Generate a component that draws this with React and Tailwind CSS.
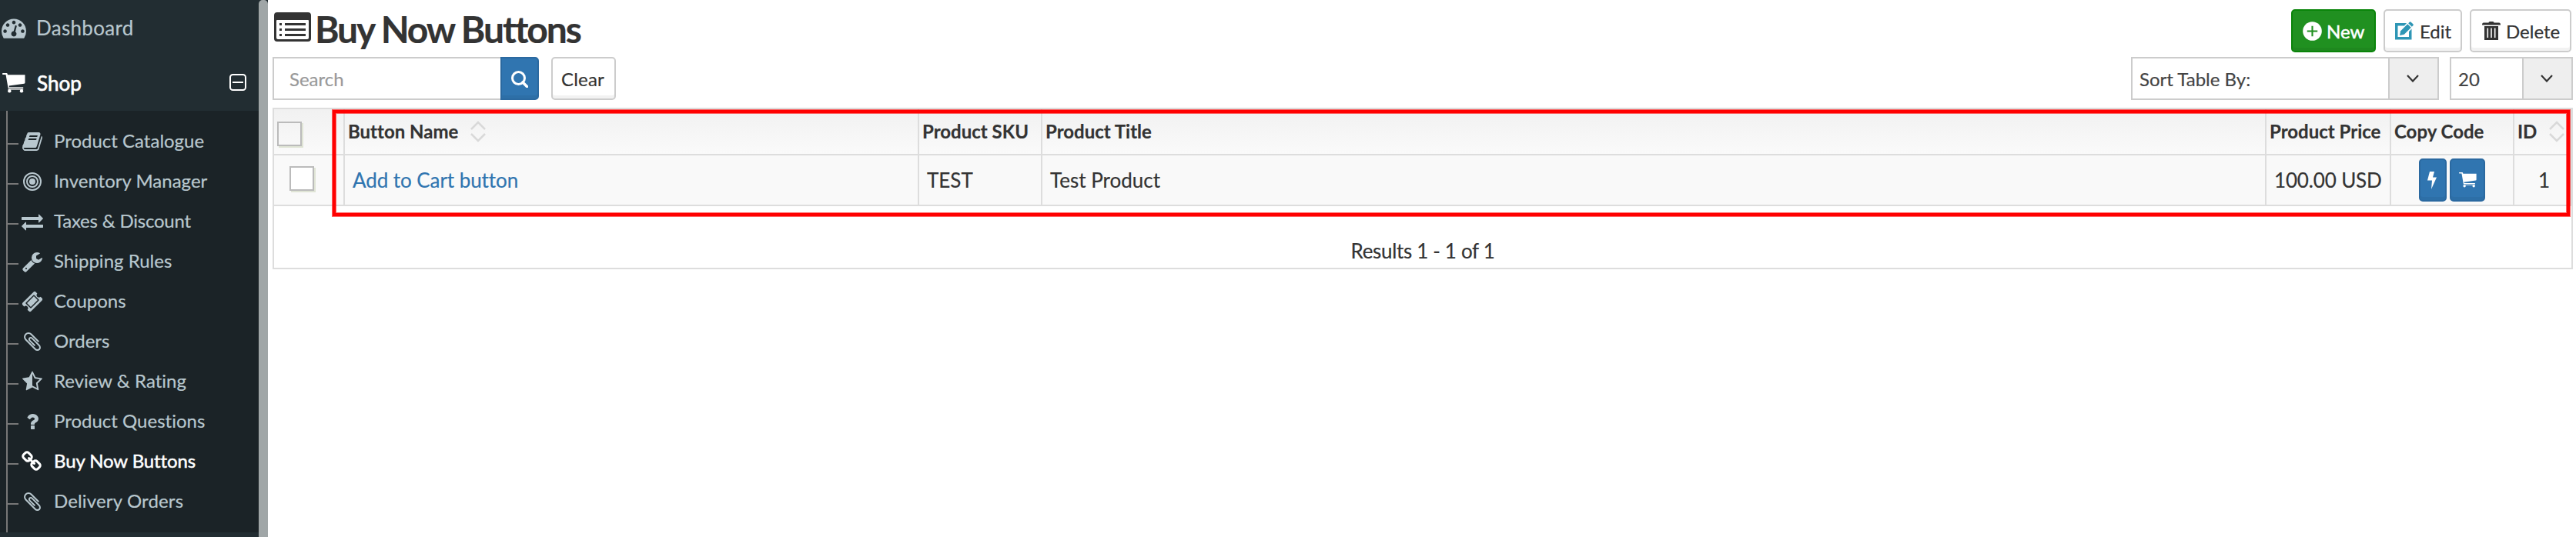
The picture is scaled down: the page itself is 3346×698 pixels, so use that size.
import React from "react";

const P = {
  dash: "M384 1152q0-53-37.5-90.5t-90.5-37.5-90.5 37.5-37.5 90.5 37.5 90.5 90.5 37.5 90.5-37.5 37.5-90.5zm192-448q0-53-37.5-90.5t-90.5-37.5-90.5 37.5-37.5 90.5 37.5 90.5 90.5 37.5 90.5-37.5 37.5-90.5zm428 481l101-382q6-26-7.5-48.5t-38.5-29.5-48 6.5-30 39.5l-101 382q-60 5-107 43.5t-63 98.5q-20 77 20 146t117 89 146-20 89-117q16-60-6-117t-72-91zm660-33q0-53-37.5-90.5t-90.5-37.5-90.5 37.5-37.5 90.5 37.5 90.5 90.5 37.5 90.5-37.5 37.5-90.5zm-640-640q0-53-37.5-90.5t-90.5-37.5-90.5 37.5-37.5 90.5 37.5 90.5 90.5 37.5 90.5-37.5 37.5-90.5zm448 192q0-53-37.5-90.5t-90.5-37.5-90.5 37.5-37.5 90.5 37.5 90.5 90.5 37.5 90.5-37.5 37.5-90.5zm320 448q0 261-141 483-19 29-54 29h-1402q-35 0-54-29-141-221-141-483 0-182 71-348t191-286 286-191 348-71 348 71 286 191 191 286 71 348z",
  link: "M1456 1216q0-40-28-68l-208-208q-28-28-68-28-42 0-72 32 3 3 19 18.5t21.5 21.5 15 19 13 25.5 3.5 27.5q0 40-28 68t-68 28q-15 0-27.5-3.5t-25.5-13-19-15-21.5-21.5-18.5-19q-33 31-33 73 0 40 28 68l206 207q27 27 68 27 40 0 68-26l147-146q28-28 28-67zm-703-705q0-40-28-68l-206-207q-28-28-68-28-39 0-68 27l-147 146q-28 28-28 67 0 40 28 68l208 208q27 27 68 27 42 0 72-31-3-3-19-18.5t-21.5-21.5-15-19-13-25.5-3.5-27.5q0-40 28-68t68-28q15 0 27.5 3.5t25.5 13 19 15 21.5 21.5 18.5 19q33-31 33-73zm895 705q0 120-85 203l-147 146q-83 83-203 83-121 0-204-85l-206-207q-83-83-83-203 0-123 88-209l-88-88q-86 88-208 88-120 0-204-84l-208-208q-84-84-84-204t85-203l147-146q83-83 203-83 121 0 204 85l206 207q83 83 83 203 0 123-88 209l88 88q86-88 208-88 120 0 204 84l208 208q84 84 84 204z",
  ticket: "M1024 452l316 316-572 572-316-316zm-211 979l618-618q19-19 19-45t-19-45l-362-362q-18-18-45-18t-45 18l-618 618q-19 19-19 45t19 45l362 362q18 18 45 18t45-18zm889-637l-907 908q-37 37-90.5 37t-90.5-37l-126-126q56-56 56-136t-56-136-136-56-136 56l-125-126q-37-37-37-90.5t37-90.5l907-906q37-37 90.5-37t90.5 37l125 125q-56 56-56 136t56 136 136 56 136-56l126 125q37 37 37 90.5t-37 90.5z",
  book: "M1703 478q40 57 18 129l-275 906q-19 64-76.5 107.5t-122.5 43.5h-923q-77 0-148.5-53.5t-99.5-131.5q-24-67-2-127 0-4 3-27t4-37q1-8-3-21.5t-3-19.5q2-11 8-21t16.5-23.5 16.5-23.5q23-38 45-91.5t30-91.5q3-10 .5-30t-.5-28q3-11 17-28t17-23q21-36 42-92t25-90q1-9-2.5-32t.5-28q4-13 22-30.5t22-22.5q19-26 42.5-84.5t27.5-96.5q1-8-3-25.5t-2-26.5q2-8 9-18t18-23 17-21q8-12 16.5-30.5t15-35 16-36 19.5-32 26.5-23.5 36-11.5 47.5 5.5l-1 3q38-9 51-9h761q74 0 114 56t18 130l-274 906q-36 119-71.5 153.5t-128.5 34.5h-869q-27 0-38 15-11 16-1 43 24 70 144 70h923q29 0 56-15.5t35-41.5l300-987q7-22 5-57 38 15 59 43zm-1064 2q-4 13 2 22.5t20 9.5h608q13 0 25.5-9.5t16.5-22.5l21-64q4-13-2-22.5t-20-9.5h-608q-13 0-25.5 9.5t-16.5 22.5zm-83 256q-4 13 2 22.5t20 9.5h608q13 0 25.5-9.5t16.5-22.5l21-64q4-13-2-22.5t-20-9.5h-608q-13 0-25.5 9.5t-16.5 22.5z",
  exchange: "M1792 1184v192q0 13-9.5 22.5t-22.5 9.5h-1376v192q0 13-9.5 22.5t-22.5 9.5q-12 0-24-10l-319-320q-9-9-9-22 0-14 9-23l320-320q9-9 23-9 13 0 22.5 9.5t9.5 22.5v192h1376q13 0 22.5 9.5t9.5 22.5zm0-544q0 14-9 23l-320 320q-9 9-23 9-13 0-22.5-9.5t-9.5-22.5v-192h-1376q-13 0-22.5-9.5t-9.5-22.5v-192q0-13 9.5-22.5t22.5-9.5h1376v-192q0-14 9-23t23-9q12 0 24 10l319 319q9 9 9 23z",
  wrench: "M448 1472q0-26-19-45t-45-19-45 19-19 45 19 45 45 19 45-19 19-45zm644-420l-682 682q-37 37-90 37-52 0-91-37l-106-108q-38-36-38-90 0-53 38-91l681-681q39 98 114.5 173.5t173.5 114.5zm634-435q0 39-23 106-47 134-164.5 217.5t-258.5 83.5q-185 0-316.5-131.5t-131.5-316.5 131.5-316.5 316.5-131.5q58 0 121.5 16.5t107.5 46.5q16 11 16 28t-16 28l-293 169v224l193 107q5-3 79-48.5t135.5-81 70.5-35.5q15 0 23.5 10t8.500 25z",
  clip: "M1596 1385q0 117-79 196t-196 79q-135 0-235-100l-777-776q-113-115-113-271 0-159 110-270t269-111q158 0 273 113l605 606q10 10 10 22 0 16-30.5 46.5t-46.5 30.5q-13 0-23-10l-606-607q-79-77-181-77-106 0-179 75t-73 181q0 105 76 181l776 777q63 63 145 63 64 0 106-42t42-106q0-82-63-145l-581-581q-26-24-60-24-29 0-48 19t-19 48q0 32 25 59l410 410q10 10 10 22 0 16-31 47t-47 31q-12 0-22-10l-410-410q-63-61-63-149 0-82 57-139t139-57q88 0 149 63l581 581q100 98 100 235z",
  star: "M1201 1004l306-297-422-62-189-382v963l377 199zm527-357q0 22-26 48l-363 354 86 500q1 7 1 20 0 50-41 50-19 0-40-12l-449-236-449 236q-22 12-40 12-21 0-31.5-14.5t-10.5-35.5q0-6 2-20l86-500-364-354q-25-27-25-48 0-37 56-46l502-73 225-455q19-41 49-41t49 41l225 455 502 73q56 9 56 46z",
  question: "M1088 1256v240q0 16-12 28t-28 12h-240q-16 0-28-12t-12-28v-240q0-16 12-28t28-12h240q16 0 28 12t12 28zm316-600q0 54-15.5 101t-35 76.5-55 59.5-57.5 43.5-61 35.5q-41 23-68.5 65t-27.5 67q0 17-12 32.5t-28 15.5h-240q-15 0-25.5-18.5t-10.5-37.5v-45q0-83 65-156.5t143-108.5q59-27 84-56t25-76q0-42-46.5-74t-107.5-32q-65 0-108 29-35 25-107 115-13 16-31 16-12 0-25-8l-164-125q-13-10-15.5-25t5.5-28q160-266 464-266 80 0 161 31t146 83 106 127.5 41 158.5z",
  target: "M896 640a256 256 0 1 1 0 512a256 256 0 1 1 0-512zM896 128a768 768 0 1 0 0 1536a768 768 0 1 0 0-1536zm0 128a640 640 0 1 1 0 1280a640 640 0 1 1 0-1280zM896 384a512 512 0 1 0 0 1024a512 512 0 1 0 0-1024zm0 128a384 384 0 1 1 0 768a384 384 0 1 1 0-768z",
};

function Fa({ name, className }) {
  return (
    <svg viewBox="0 0 1792 1792" className={className} fill="currentColor" fillRule={name === "target" ? "evenodd" : "nonzero"}>
      <path d={P[name]} />
    </svg>
  );
}

function Cart({ className }) {
  return (
    <svg viewBox="0 0 30 26" className={className} fill="currentColor">
      <path d="M.8 0H5.600q.9 0 1.100.9L7 2.300H29.500V12.500Q29.500 13.600 28.400 13.800L8.600 16.600 9 18.200H27.200V19.600H7.600L4.500 2H.8Q0 2 0 1T.8 0z" />
      <path d="M7.500 20.300h19.700v1.300H7.500z" />
      <circle cx="9.300" cy="23.200" r="2.200" />
      <circle cx="25" cy="23.200" r="2.200" />
    </svg>
  );
}

const items = [
  ["book", "Product Catalogue", ""],
  ["target", "Inventory Manager", ""],
  ["exchange", "Taxes & Discount", "tracking-[-0.22px]"],
  ["wrench", "Shipping Rules", ""],
  ["ticket", "Coupons", ""],
  ["clip", "Orders", ""],
  ["star", "Review & Rating", ""],
  ["question", "Product Questions", ""],
  ["link", "Buy Now Buttons", "tracking-[-0.1px] [-webkit-text-stroke:0.5px_white]"],
  ["clip", "Delivery Orders", "tracking-[0.15px]"],
];

function Sidebar() {
  return (
    <aside className="w-[348px] h-[698px] flex bg-[#222d32] shrink-0">
      <nav className="w-[336px] text-[#b8c7ce]">
        <div className="h-[72px] flex items-center pl-[2px]">
          <Fa name="dash" className="w-8 h-8" />
          <span className="ml-[13px] text-[26px] leading-8 tracking-[0.3px]">Dashboard</span>
        </div>
        <div className="h-[72px] flex items-center pl-[3px] pr-[16px] text-white">
          <Cart className="w-[30px] h-[26px]" />
          <span className="ml-[15px] text-[26px] leading-8 [-webkit-text-stroke:0.7px_white]">Shop</span>
          <svg viewBox="0 0 22 22" className="ml-auto -mt-[2px] w-[22px] h-[22px]" fill="none" stroke="currentColor" strokeWidth="2">
            <rect x="1" y="1" width="20" height="20" rx="3.500" />
            <path d="M4 11h14" />
          </svg>
        </div>
        <div className="bg-[#1b2327] pl-2">
          <ul className="h-[548px] border-l-2 border-[#777] pt-[17px]">
            {items.map(([ic, label, extra], i) => (
              <li key={i} className={"h-[52px] flex items-center " + (ic === "link" ? "text-white" : "")}>
                <span className="w-[14px] h-[2px] bg-[#777]" />
                <span className="w-9 flex justify-center pb-[6px]">
                  <Fa name={ic} className="w-7 h-7" />
                </span>
                <span className={"ml-[10px] text-[24px] leading-8 -mt-2 " + extra}>{label}</span>
              </li>
            ))}
          </ul>
        </div>
      </nav>
      <div className="w-3 bg-[#a0a6a7] rounded-t-[5px]" />
    </aside>
  );
}

function Sort({ className }) {
  return (
    <svg viewBox="0 0 20 28" className={"w-5 h-7 " + className} fill="none" stroke="#d9d9d9" strokeWidth="2.500">
      <path d="M1 11l9-9 9 9M1 17l9 9 9-9" />
    </svg>
  );
}

function Select({ label, className }) {
  return (
    <div className={"h-14 border-2 border-[#ccc] flex items-center text-[24px] text-[#444] " + className}>
      <span className="flex-1 pl-[9px] pt-px">{label}</span>
      <span className="w-[64px] h-full bg-[#eee] border-l-2 border-[#ccc] flex items-center justify-center pr-[2px]">
        <svg viewBox="0 0 16 10" className="w-4 h-[10px]" fill="none" stroke="#333" strokeWidth="2.200">
          <path d="M1 1l7 7.500L15 1" />
        </svg>
      </span>
    </div>
  );
}

function Check({ className }) {
  return <span className={"w-8 h-8 border-2 border-[#bbb] shadow-[2px_2px_0_#dfe4d5] " + className} />;
}

const th = "h-[60px] border-b-2 border-r-2 border-[#ddd] pl-1 flex items-center text-[24px] font-bold whitespace-nowrap";
const td = "h-[66px] border-b-2 border-r-2 border-[#ddd] pl-[10px] flex items-center text-[26px] whitespace-nowrap";
const btn = "h-14 rounded-[5px] border-2 flex items-center text-[24px] shadow-[inset_0_-4px_0_rgba(0,0,0,0.05)] ";
const blue = "bg-[#3075b0] border-[#2b69a0] text-white ";

export default function App() {
  return (
    <div className="w-[3346px] h-[698px] overflow-hidden bg-white flex font-['Lato',sans-serif] text-[#333] [font-variant-ligatures:none] [-webkit-text-stroke:0.2px]">
      <Sidebar />
      <main className="w-[2998px] pl-[6px] pr-1">
        <header className="h-[74px] flex items-start justify-between pr-[2px]">
          <div className="flex items-start pt-4 pl-[2px]">
            <svg viewBox="0 0 48 38" className="w-12 h-[38px]">
              <path fillRule="evenodd" fill="#333" d="M4 0h40q4 0 4 4v30q0 4-4 4H4q-4 0-4-4V4q0-4 4-4zM4 10q-1 0-1 1v22q0 2 2 2h38q2 0 2-2V11q0-1-1-1z" />
              <path stroke="#333" strokeWidth="3" d="M7 15.500h3M14 15.500h27M7 22.500h3M14 22.500h27M7 29.500h3M14 29.500h27" />
            </svg>
            <h1 className="ml-[5px] text-[48px] leading-[48px] font-bold tracking-[-2.1px] -mt-[2px]">Buy Now Buttons</h1>
          </div>
          <div className="flex gap-[10px] pt-3">
            <div className={btn + "w-[110px] bg-[#209020] border-[#0a840a] text-white pl-[13px]"}>
              <svg viewBox="0 0 26 26" className="w-[25px] h-[25px] mr-[6px]">
                <circle cx="13" cy="13" r="12.800" fill="#fff" />
                <path d="M13 6v14M6 13h14" stroke="#209020" strokeWidth="2.200" />
              </svg>
              <span className="pt-px [-webkit-text-stroke:0.5px_white]">New</span>
            </div>
            <div className={btn + "w-[102px] border-[#ccc] pl-[13px]"}>
              <svg viewBox="0 0 24 24" className="w-6 h-6 mr-2" fill="#2e96b5">
                <path d="M0 2h15l-3 3.500H3.500V20H18v-7l3.500-3.500V23.500H0z" />
                <path d="M6 18l1.200-5.800L16.200 3.200l4.600 4.600L11.800 16.800z" />
                <path d="M17.200 2.200l1.500-1.500q1-1 2 0l2.600 2.600q1 1 0 2l-1.500 1.500z" />
              </svg>
              <span className="pt-px">Edit</span>
            </div>
            <div className={btn + "w-[132px] border-[#ccc] pl-[14px]"}>
              <svg viewBox="0 0 24 24" className="w-6 h-6 mr-[7px]" fill="#333">
                <path d="M8.500 1.500Q8.500 0 10 0h4q1.500 0 1.500 1.500H22q2 0 2 3H0q0-3 2-3z" />
                <path fillRule="evenodd" d="M3 6h18v18H3zM6.500 8.500v12.500h1.600V8.500zM11.200 8.500v12.500h1.600V8.500zM15.900 8.500v12.500h1.600V8.500z" />
              </svg>
              <span className="pt-px">Delete</span>
            </div>
          </div>
        </header>
        <div className="h-[66px] flex">
          <div className="w-[296px] h-14 border-2 border-r-0 border-[#ccc] flex items-center pl-5 pt-px text-[24px] text-[#999]">Search</div>
          <div className={btn + blue + "w-[50px] rounded-l-none pl-3 pt-[2px]"}>
            <svg viewBox="0 0 22 22" className="w-[22px] h-[22px]" fill="none" stroke="currentColor">
              <circle cx="9.500" cy="9.500" r="8" strokeWidth="3" />
              <path d="M15 15l5.500 5.500" strokeWidth="3.600" strokeLinecap="round" />
            </svg>
          </div>
          <div className={btn + "w-[84px] ml-4 border-[#ccc] pl-[11px] pt-px tracking-[0.2px]"}>Clear</div>
          <Select label="Sort Table By:" className="w-[400px] ml-auto" />
          <Select label="20" className="w-[160px] ml-[14px]" />
        </div>
        <section className="h-[210px] border-2 border-[#ddd] relative">
          <div className="grid grid-cols-[92px_746px_160px_1590px_162px_160px_74px] bg-[linear-gradient(#f1f1f1,#fafafa_58px,#f9f9f9_58px)]">
            <div className={th}><Check className="mt-[6px]" /></div>
            <div className={th}>Button Name<Sort className="ml-4" /></div>
            <div className={th}>Product SKU</div>
            <div className={th}>Product Title</div>
            <div className={th}>Product Price</div>
            <div className={th}>Copy Code</div>
            <div className={th + " border-r-0"}>ID<Sort className="ml-4" /></div>
            <div className={td}><Check className="ml-[10px] -mt-[4px] bg-white" /></div>
            <div className={td + " text-[#3075b0] tracking-[-0.07px]"}>Add to Cart button</div>
            <div className={td}>TEST</div>
            <div className={td}>Test Product</div>
            <div className={td + " tracking-[-0.15px]"}>100.00 USD</div>
            <div className={td + " gap-1"}>
              <span className={btn + blue + "w-9 ml-[26px] pl-[9px]"}>
                <svg viewBox="0 0 12 23" className="w-3 h-[23px]" fill="currentColor">
                  <path d="M3 0H9L7 7.500H12L5 23 6 11.500H0z" />
                </svg>
              </span>
              <span className={btn + blue + "w-[46px] pl-[10px]"}>
                <Cart className="w-[23px] h-5" />
              </span>
            </div>
            <div className={td + " border-r-0 justify-center pl-0 pr-[5px]"}>1</div>
          </div>
          <p className="pt-[42px] text-center text-[26px] leading-8 tracking-[-0.34px]">Results 1 - 1 of 1</p>
          <div className="absolute left-[76px] top-px w-[2906px] h-[138px] border-4 border-[#f00] shadow-[0_0_0_1px_rgba(255,0,0,0.6),inset_0_0_0_1px_rgba(255,0,0,0.6)]" />
        </section>
      </main>
    </div>
  );
}
